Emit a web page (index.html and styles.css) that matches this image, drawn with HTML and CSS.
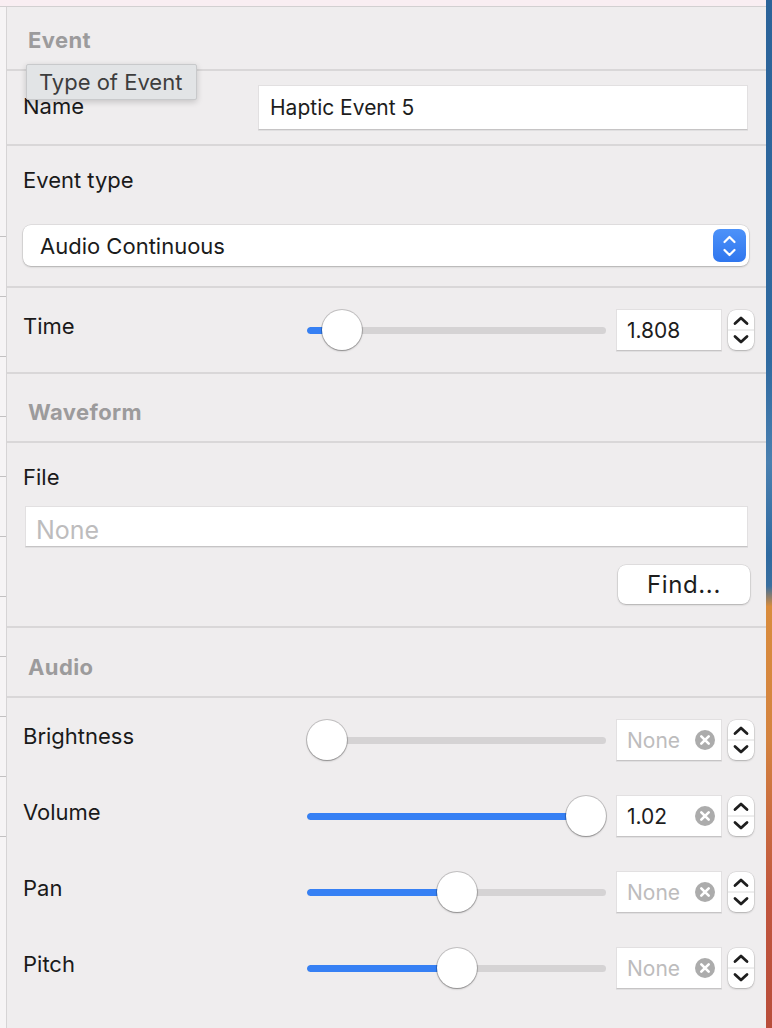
FILE: index.html
```html
<!DOCTYPE html>
<html>
<head>
<meta charset="utf-8">
<link rel="stylesheet" href="styles.css">
</head>
<body>
<div class="screen">
  <div class="main">
    <div class="topbar"></div>
    <div class="body">
      <div class="leftstrip">
        <div class="tick"></div><div class="tick"></div><div class="tick"></div><div class="tick"></div>
        <div class="tick"></div><div class="tick"></div><div class="tick"></div><div class="tick"></div>
        <div class="tick"></div><div class="tick"></div><div class="tick"></div>
      </div>
      <div class="panel">
        <div class="hdr hdr-first sect"><span>Event</span></div>

        <div class="name-row sect">
          <span class="label name-label">Name</span>
          <div class="textfield name-field">Haptic Event 5</div>
        </div>

        <div class="type-sect sect">
          <div class="label">Event type</div>
          <div class="popup">
            <span>Audio Continuous</span>
            <span class="popup-btn">
              <svg width="33" height="32" viewBox="0 0 33 32"><path d="M11.5 12 L16.5 7 L21.5 12" fill="none" stroke="#fff" stroke-width="2.2" stroke-linecap="round" stroke-linejoin="round"/><path d="M11.5 20 L16.5 25 L21.5 20" fill="none" stroke="#fff" stroke-width="2.2" stroke-linecap="round" stroke-linejoin="round"/></svg>
            </span>
          </div>
        </div>

        <div class="slider-row time-row sect">
          <span class="label">Time</span>
          <div class="slider">
            <div class="track"><div class="fill" style="width:35px"></div></div>
            <div class="thumb" style="left:15px"></div>
          </div>
          <div class="numfield"><span class="val">1.808</span></div>
          <div class="stepper">
            <svg width="26" height="40" viewBox="0 0 26 40"><path d="M7 13.5 L13 8 L19 13.5" fill="none" stroke="#1e1e1e" stroke-width="2.8" stroke-linecap="round" stroke-linejoin="round"/><line x1="0" y1="20" x2="26" y2="20" stroke="#dcdcdc" stroke-width="1"/><path d="M7 26.5 L13 32 L19 26.5" fill="none" stroke="#1e1e1e" stroke-width="2.8" stroke-linecap="round" stroke-linejoin="round"/></svg>
          </div>
        </div>

        <div class="hdr hdr-mid sect"><span>Waveform</span></div>

        <div class="file-sect sect">
          <div class="label">File</div>
          <div class="textfield file-field"><span class="ph">None</span></div>
          <div class="btn-line"><div class="button">Find...</div></div>
        </div>

        <div class="hdr hdr-mid hdr-audio sect"><span>Audio</span></div>

        <div class="audio">
          <div class="slider-row audio-row">
            <span class="label">Brightness</span>
            <div class="slider">
              <div class="track"><div class="fill" style="width:0px"></div></div>
              <div class="thumb" style="left:0px"></div>
            </div>
            <div class="numfield"><span class="val ph">None</span><span class="clear"><svg width="20" height="20" viewBox="0 0 20 20"><circle cx="10" cy="10" r="10" fill="#acacac"/><path d="M6.3 6.3 L13.7 13.7 M13.7 6.3 L6.3 13.7" stroke="#fff" stroke-width="2.6" stroke-linecap="round"/></svg></span></div>
            <div class="stepper">
              <svg width="26" height="40" viewBox="0 0 26 40"><path d="M7 13.5 L13 8 L19 13.5" fill="none" stroke="#1e1e1e" stroke-width="2.8" stroke-linecap="round" stroke-linejoin="round"/><line x1="0" y1="20" x2="26" y2="20" stroke="#dcdcdc" stroke-width="1"/><path d="M7 26.5 L13 32 L19 26.5" fill="none" stroke="#1e1e1e" stroke-width="2.8" stroke-linecap="round" stroke-linejoin="round"/></svg>
            </div>
          </div>

          <div class="slider-row audio-row">
            <span class="label">Volume</span>
            <div class="slider">
              <div class="track"><div class="fill" style="width:279px"></div></div>
              <div class="thumb" style="left:259px"></div>
            </div>
            <div class="numfield"><span class="val">1.02</span><span class="clear"><svg width="20" height="20" viewBox="0 0 20 20"><circle cx="10" cy="10" r="10" fill="#acacac"/><path d="M6.3 6.3 L13.7 13.7 M13.7 6.3 L6.3 13.7" stroke="#fff" stroke-width="2.6" stroke-linecap="round"/></svg></span></div>
            <div class="stepper">
              <svg width="26" height="40" viewBox="0 0 26 40"><path d="M7 13.5 L13 8 L19 13.5" fill="none" stroke="#1e1e1e" stroke-width="2.8" stroke-linecap="round" stroke-linejoin="round"/><line x1="0" y1="20" x2="26" y2="20" stroke="#dcdcdc" stroke-width="1"/><path d="M7 26.5 L13 32 L19 26.5" fill="none" stroke="#1e1e1e" stroke-width="2.8" stroke-linecap="round" stroke-linejoin="round"/></svg>
            </div>
          </div>

          <div class="slider-row audio-row">
            <span class="label">Pan</span>
            <div class="slider">
              <div class="track"><div class="fill" style="width:150px"></div></div>
              <div class="thumb" style="left:130px"></div>
            </div>
            <div class="numfield"><span class="val ph">None</span><span class="clear"><svg width="20" height="20" viewBox="0 0 20 20"><circle cx="10" cy="10" r="10" fill="#acacac"/><path d="M6.3 6.3 L13.7 13.7 M13.7 6.3 L6.3 13.7" stroke="#fff" stroke-width="2.6" stroke-linecap="round"/></svg></span></div>
            <div class="stepper">
              <svg width="26" height="40" viewBox="0 0 26 40"><path d="M7 13.5 L13 8 L19 13.5" fill="none" stroke="#1e1e1e" stroke-width="2.8" stroke-linecap="round" stroke-linejoin="round"/><line x1="0" y1="20" x2="26" y2="20" stroke="#dcdcdc" stroke-width="1"/><path d="M7 26.5 L13 32 L19 26.5" fill="none" stroke="#1e1e1e" stroke-width="2.8" stroke-linecap="round" stroke-linejoin="round"/></svg>
            </div>
          </div>

          <div class="slider-row audio-row">
            <span class="label">Pitch</span>
            <div class="slider">
              <div class="track"><div class="fill" style="width:150px"></div></div>
              <div class="thumb" style="left:130px"></div>
            </div>
            <div class="numfield"><span class="val ph">None</span><span class="clear"><svg width="20" height="20" viewBox="0 0 20 20"><circle cx="10" cy="10" r="10" fill="#acacac"/><path d="M6.3 6.3 L13.7 13.7 M13.7 6.3 L6.3 13.7" stroke="#fff" stroke-width="2.6" stroke-linecap="round"/></svg></span></div>
            <div class="stepper">
              <svg width="26" height="40" viewBox="0 0 26 40"><path d="M7 13.5 L13 8 L19 13.5" fill="none" stroke="#1e1e1e" stroke-width="2.8" stroke-linecap="round" stroke-linejoin="round"/><line x1="0" y1="20" x2="26" y2="20" stroke="#dcdcdc" stroke-width="1"/><path d="M7 26.5 L13 32 L19 26.5" fill="none" stroke="#1e1e1e" stroke-width="2.8" stroke-linecap="round" stroke-linejoin="round"/></svg>
            </div>
          </div>
        </div>

        <div class="tooltip">Type of Event</div>
      </div>
    </div>
  </div>
  <div class="desktop"></div>
</div>
</body>
</html>
```

FILE: styles.css
```css
* { box-sizing: border-box; }
html, body { margin: 0; padding: 0; }
body {
  font-family: "Inter", "Noto Sans", sans-serif;
  font-size: 22px;
  color: #1b1b1b;
  background: #efedee;
}
.screen { display: flex; width: 772px; height: 1028px; overflow: hidden; }
.main { flex: 1; display: flex; flex-direction: column; }
.topbar { height: 7px; background: #f9eef2; border-bottom: 1px solid #d2d0d1; }
.body { flex: 1; display: flex; }
.leftstrip {
  width: 7px;
  background: #f6f4f5;
  border-right: 1px solid #d6d4d5;
  padding-top: 229px;
}
.tick { height: 60px; border-top: 1px solid #c3c1c2; }
.desktop {
  width: 6px;
  background: linear-gradient(to bottom, #2b6399 0%, #2f6aa0 35%, #4a80b0 45%, #2f6aa0 54%, #3a6f9f 57%, #d98c3c 59%, #d4833f 72%, #c96a3f 80%, #c0553d 88%, #b84d3a 100%);
}
.panel { flex: 1; background: #efedee; position: relative; display: flex; flex-direction: column; }
.sect { border-bottom: 2px solid #d9d7d8; }

.label { line-height: 26px; color: #1a1a1a; }

.hdr {
  display: flex;
  align-items: center;
  padding-left: 21px;
  font-weight: 700;
  color: #9c9b9c;
  font-size: 22px;
  letter-spacing: 0.4px;
}
.hdr-first { height: 64px; padding-top: 4px; }
.hdr-mid { height: 69px; padding-top: 9px; }
.hdr-audio { height: 70px; }

.name-row {
  height: 75px;
  display: flex;
  align-items: center;
  padding: 0 18px 0 16px;
}
.name-label { width: 235px; padding-bottom: 3px; }
.textfield {
  background: #fff;
  border: 1px solid #e2e0e1;
  border-bottom-color: #c6c4c5;
  box-shadow: 0 1px 0 rgba(0,0,0,0.06);
  display: flex;
  align-items: center;
}
.name-field { flex: 1; height: 45px; padding-left: 11px; color: #1d1d1d; font-size: 21px; }

.type-sect { height: 142px; padding: 21px 17px 0 16px; }
.popup {
  margin-top: 32px;
  height: 41px;
  background: #fff;
  border-radius: 8px;
  box-shadow: 0 0 0 0.5px rgba(0,0,0,0.12), 0 1px 2px rgba(0,0,0,0.22);
  display: flex;
  align-items: center;
  justify-content: space-between;
  padding: 0 3px 0 17px;
}
.popup-btn {
  width: 33px;
  height: 33px;
  border-radius: 7px;
  background: linear-gradient(to bottom, #4d92f9, #2f76ee);
  display: flex;
  align-items: center;
  justify-content: center;
}

.slider-row {
  display: grid;
  grid-template-columns: 284px 299px 116px 32px;
  align-items: center;
  padding: 0 12px 0 16px;
}
.slider-row .numfield, .slider-row .stepper { justify-self: end; }
.slider-row .label { padding-bottom: 9px; }
.time-row { height: 86px; }

.slider { position: relative; height: 40px; display: flex; align-items: center; }
.track { width: 100%; height: 7px; border-radius: 4px; background: #d5d3d4; overflow: hidden; }
.fill { height: 100%; background: #3680f4; border-radius: 4px; }
.thumb {
  position: absolute;
  top: 0;
  width: 40px;
  height: 40px;
  border-radius: 50%;
  background: #fff;
  box-shadow: 0 0 0 1px rgba(0,0,0,0.18), 0 1px 2px rgba(0,0,0,0.3);
}

.numfield {
  width: 106px;
  height: 42px;
  background: #fff;
  border: 1px solid #e2e0e1;
  border-bottom-color: #c6c4c5;
  box-shadow: 0 1px 0 rgba(0,0,0,0.06);
  display: flex;
  align-items: center;
  justify-content: space-between;
  padding: 0 6px 0 10px;
  color: #1d1d1d;
  font-size: 21px;
}
.ph { color: #bdbcbd; }
.clear { display: flex; width: 20px; height: 20px; }

.stepper {
  width: 26px;
  height: 40px;
  background: #fff;
  border-radius: 8px;
  box-shadow: 0 0 0 0.5px rgba(0,0,0,0.12), 0 1px 2px rgba(0,0,0,0.22);
  display: flex;
}

.file-sect { height: 185px; padding: 21px 0 0 16px; }
.file-field { margin: 16px 18px 0 2px; height: 41px; padding: 7px 0 0 10px; font-size: 25px; }
.btn-line { display: flex; justify-content: flex-end; padding-right: 16px; margin-top: 18px; }
.button {
  width: 132px;
  height: 39px;
  background: #fff;
  border-radius: 8px;
  box-shadow: 0 0 0 0.5px rgba(0,0,0,0.12), 0 1px 2px rgba(0,0,0,0.22);
  display: flex;
  align-items: center;
  justify-content: center;
  font-size: 24px;
  letter-spacing: 0.6px;
  color: #1d1d1d;
}

.audio { padding-top: 4px; }
.audio-row { height: 76px; }

.tooltip {
  position: absolute;
  left: 19px;
  top: 57px;
  width: 171px;
  height: 36px;
  background: #e2e4e6;
  border: 1px solid #c8c9cb;
  border-radius: 2px;
  box-shadow: 0 2px 6px rgba(0,0,0,0.18);
  color: #3d3d3d;
  font-size: 22px;
  display: flex;
  align-items: center;
  padding-left: 12px;
}
```
